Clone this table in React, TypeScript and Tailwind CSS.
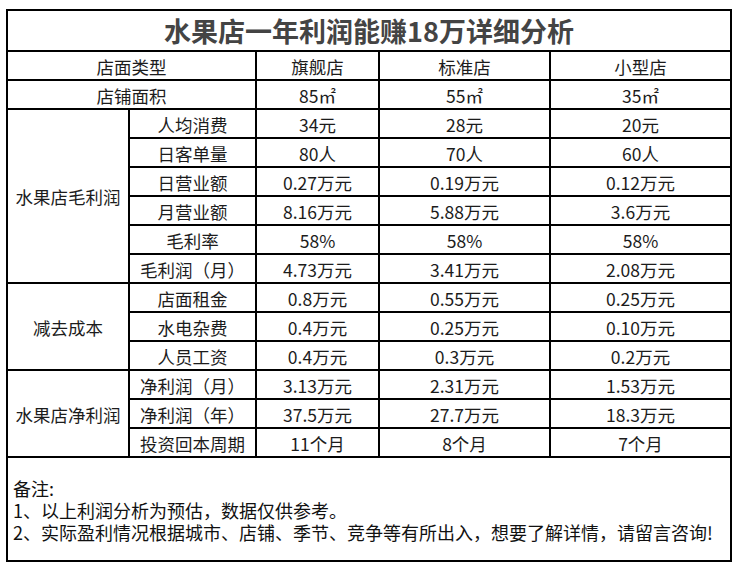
type Row = { label: string; values: [string, string, string] };

const groups: { name: string; span: string; rows: Row[] }[] = [
  {
    name: "水果店毛利润",
    span: "row-span-6",
    rows: [
      { label: "人均消费", values: ["34元", "28元", "20元"] },
      { label: "日客单量", values: ["80人", "70人", "60人"] },
      { label: "日营业额", values: ["0.27万元", "0.19万元", "0.12万元"] },
      { label: "月营业额", values: ["8.16万元", "5.88万元", "3.6万元"] },
      { label: "毛利率", values: ["58%", "58%", "58%"] },
      { label: "毛利润（月）", values: ["4.73万元", "3.41万元", "2.08万元"] },
    ],
  },
  {
    name: "减去成本",
    span: "row-span-3",
    rows: [
      { label: "店面租金", values: ["0.8万元", "0.55万元", "0.25万元"] },
      { label: "水电杂费", values: ["0.4万元", "0.25万元", "0.10万元"] },
      { label: "人员工资", values: ["0.4万元", "0.3万元", "0.2万元"] },
    ],
  },
  {
    name: "水果店净利润",
    span: "row-span-3",
    rows: [
      { label: "净利润（月）", values: ["3.13万元", "2.31万元", "1.53万元"] },
      { label: "净利润（年）", values: ["37.5万元", "27.7万元", "18.3万元"] },
      { label: "投资回本周期", values: ["11个月", "8个月", "7个月"] },
    ],
  },
];

function Cell({ children, className = "" }: { children: React.ReactNode; className?: string }) {
  return (
    <div className={`bg-white flex items-center justify-center pt-[3px] whitespace-nowrap ${className}`}>
      {children}
    </div>
  );
}

export default function App() {
  return (
    <div className="w-[738px] h-[574px] bg-white pt-[9px] pl-[6px] font-['Noto_Sans_CJK_SC','Noto_Sans',sans-serif]">
      <div className="w-[726px] bg-black p-[2px] grid gap-[2px] grid-cols-[120px_125px_121px_169px_179px] grid-rows-[39px_repeat(14,27px)_102px] text-[17.5px] text-[#1c1c1c]">
        <div className="col-span-5 bg-white flex items-center justify-center text-[27px] font-bold text-[#444] pt-[2px]">
          水果店一年利润能赚18万详细分析
        </div>

        <Cell className="col-span-2">店面类型</Cell>
        <Cell>旗舰店</Cell>
        <Cell>标准店</Cell>
        <Cell>小型店</Cell>

        <Cell className="col-span-2">店铺面积</Cell>
        <Cell>85㎡</Cell>
        <Cell>55㎡</Cell>
        <Cell>35㎡</Cell>

        {groups.map((g) => [
          <Cell key={g.name} className={g.span}>
            {g.name}
          </Cell>,
          ...g.rows.map((r) => [
            <Cell key={r.label}>{r.label}</Cell>,
            ...r.values.map((v, j) => <Cell key={r.label + j}>{v}</Cell>),
          ]),
        ])}

        <div className="col-span-5 bg-white pl-[5px] pt-[19px] text-[18px] leading-[22px] text-[#111]">
          <p>备注:</p>
          <p>1、以上利润分析为预估，数据仅供参考。</p>
          <p>2、实际盈利情况根据城市、店铺、季节、竞争等有所出入，想要了解详情，请留言咨询!</p>
        </div>
      </div>
    </div>
  );
}
